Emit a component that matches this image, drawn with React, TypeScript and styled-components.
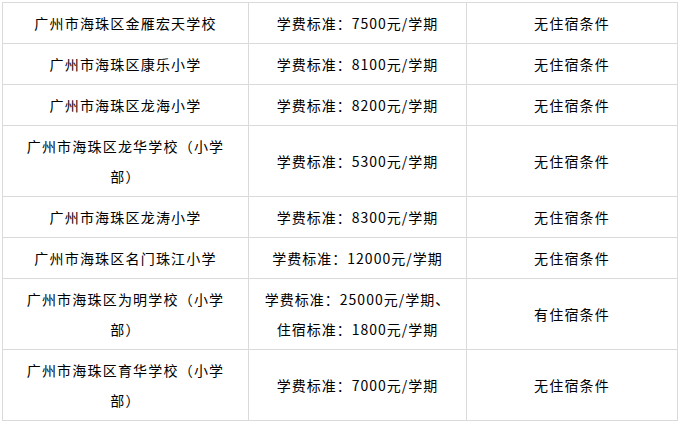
import React from "react";
import styled, { createGlobalStyle } from "styled-components";

const GlobalStyle = createGlobalStyle`
  html, body {
    margin: 0;
    padding: 0;
    background: #ffffff;
  }
  body {
    font-family: "Noto Sans CJK SC", "Liberation Sans", sans-serif;
    color: #000;
  }
`;

const Page = styled.div`
  padding: 2px 0 0 2px;
`;

const Table = styled.table`
  width: 675px;
  table-layout: fixed;
  border-collapse: collapse;
  font-size: 14px;
  letter-spacing: 1.2px;
`;

const Col = styled.col<{ $w: number }>`
  width: ${(p) => p.$w}px;
`;

const Cell = styled.td`
  border: 1px solid #dadada;
  padding: 5px 15px;
  line-height: 30px;
  text-align: center;
  vertical-align: middle;
  line-break: strict;
`;

const FeeLine = styled.span`
  display: block;
  white-space: nowrap;
  letter-spacing: 1px;
`;

type School = {
  name: string;
  fee: string[];
  stay: string;
};

const schools: School[] = [
  { name: "广州市海珠区金雁宏天学校", fee: ["学费标准：7500元/学期"], stay: "无住宿条件" },
  { name: "广州市海珠区康乐小学", fee: ["学费标准：8100元/学期"], stay: "无住宿条件" },
  { name: "广州市海珠区龙海小学", fee: ["学费标准：8200元/学期"], stay: "无住宿条件" },
  { name: "广州市海珠区龙华学校（小学部）", fee: ["学费标准：5300元/学期"], stay: "无住宿条件" },
  { name: "广州市海珠区龙涛小学", fee: ["学费标准：8300元/学期"], stay: "无住宿条件" },
  { name: "广州市海珠区名门珠江小学", fee: ["学费标准：12000元/学期"], stay: "无住宿条件" },
  {
    name: "广州市海珠区为明学校（小学部）",
    fee: ["学费标准：25000元/学期、", "住宿标准：1800元/学期"],
    stay: "有住宿条件",
  },
  { name: "广州市海珠区育华学校（小学部）", fee: ["学费标准：7000元/学期"], stay: "无住宿条件" },
];

export default function App() {
  return (
    <>
      <GlobalStyle />
      <Page>
        <Table>
          <colgroup>
            <Col $w={246} />
            <Col $w={218} />
            <Col $w={211} />
          </colgroup>
          <tbody>
            {schools.map((s) => (
              <tr key={s.name}>
                <Cell>{s.name}</Cell>
                <Cell>
                  {s.fee.map((line) => (
                    <FeeLine key={line}>{line}</FeeLine>
                  ))}
                </Cell>
                <Cell>{s.stay}</Cell>
              </tr>
            ))}
          </tbody>
        </Table>
      </Page>
    </>
  );
}
